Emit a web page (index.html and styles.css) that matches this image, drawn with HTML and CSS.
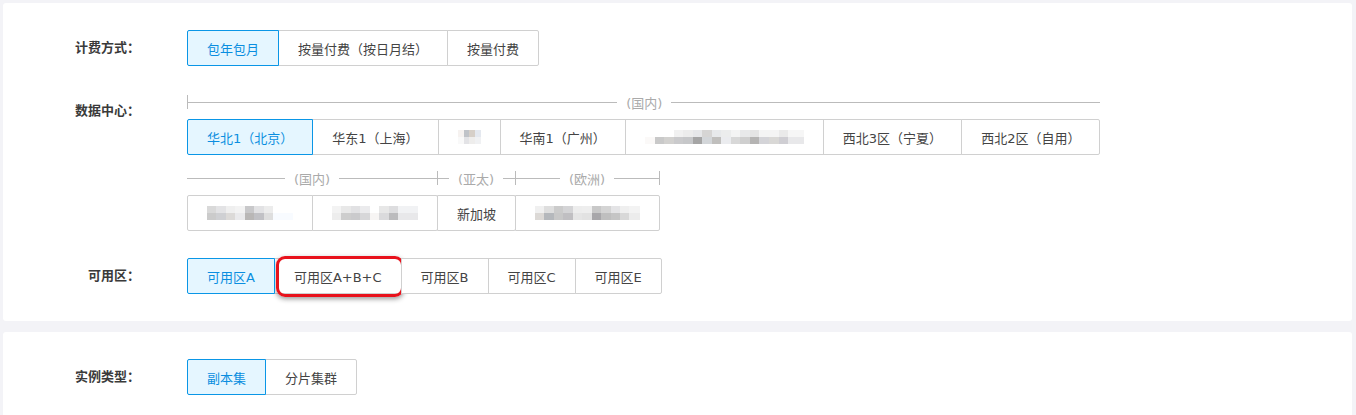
FILE: index.html
```html
<!DOCTYPE html>
<html lang="zh-CN">

<head>
    <meta charset="UTF-8">
    <meta name="viewport" content="width=device-width, initial-scale=1.0">
    <title>购买实例</title>
    <link rel="stylesheet" href="styles.css">
</head>

<body>
    <div class="page">

        <section class="card">
            <div class="form-row">
                <div class="form-label">计费方式：</div>
                <div class="form-field">
                    <div class="btn-group">
                        <button class="opt active">包年包月</button>
                        <button class="opt">按量付费（按日月结）</button>
                        <button class="opt">按量付费</button>
                    </div>
                </div>
            </div>

            <div class="form-row">
                <div class="form-label">数据中心：</div>
                <div class="form-field">
                    <div class="region-group">
                        <div class="region-line">
                            <i class="tick"></i><span class="region-name">(国内)</span>
                        </div>
                        <div class="btn-group">
                            <button class="opt active">华北1（北京）</button>
                            <button class="opt">华东1（上海）</button>
                            <button class="opt w-63"><span class="mosaic mosaic-1"></span></button>
                            <button class="opt">华南1（广州）</button>
                            <button class="opt w-199"><span class="mosaic mosaic-2"></span></button>
                            <button class="opt">西北3区（宁夏）</button>
                            <button class="opt">西北2区（自用）</button>
                        </div>
                    </div>

                    <div class="region-groups">
                        <div class="region-group">
                            <div class="region-line">
                                <span class="region-name">(国内)</span><i class="tick"></i>
                            </div>
                            <div class="btn-group">
                                <button class="opt w-126"><span class="mosaic mosaic-3"></span></button>
                                <button class="opt w-126"><span class="mosaic mosaic-4"></span></button>
                            </div>
                        </div>
                        <div class="region-group">
                            <div class="region-line">
                                <span class="region-name">(亚太)</span><i class="tick"></i>
                            </div>
                            <div class="btn-group">
                                <button class="opt">新加坡</button>
                            </div>
                        </div>
                        <div class="region-group">
                            <div class="region-line">
                                <span class="region-name">(欧洲)</span><i class="tick"></i>
                            </div>
                            <div class="btn-group">
                                <button class="opt w-145"><span class="mosaic mosaic-5"></span></button>
                            </div>
                        </div>
                    </div>
                </div>
            </div>

            <div class="form-row">
                <div class="form-label">可用区：</div>
                <div class="form-field">
                    <div class="btn-group">
                        <button class="opt active">可用区A</button>
                        <button class="opt marked">可用区A+B+C</button>
                        <button class="opt">可用区B</button>
                        <button class="opt">可用区C</button>
                        <button class="opt">可用区E</button>
                    </div>
                </div>
            </div>
        </section>

        <section class="card">
            <div class="form-row">
                <div class="form-label">实例类型：</div>
                <div class="form-field">
                    <div class="btn-group">
                        <button class="opt active">副本集</button>
                        <button class="opt">分片集群</button>
                    </div>
                </div>
            </div>
        </section>

    </div>
</body>

</html>
```

FILE: styles.css
```css
body {
    margin: 0;
    background-color: #f3f3f7;
    font-family: "DejaVu Sans", "Noto Sans CJK SC", sans-serif;
    font-size: 13px;
    color: #444;
}

.page {
    display: flex;
    flex-direction: column;
    gap: 11px;
    padding: 3px 4px 0 3px;
}

.card {
    background-color: #fff;
    border-radius: 3px;
    padding: 27px 0;
}

/* Righe del form */
.form-row {
    display: flex;
    align-items: flex-start;
}

.form-row + .form-row {
    margin-top: 27px;
}

.form-label {
    width: 137px;
    margin-right: 47px;
    text-align: right;
    line-height: 36px;
    font-weight: 700;
    color: #3a3a3a;
}

.form-field {
    display: flex;
    flex-direction: column;
    align-items: flex-start;
}

/* Gruppi di pulsanti */
.btn-group {
    display: flex;
}

.opt {
    height: 36px;
    padding: 0 19px;
    margin-left: -1px;
    border: 1px solid #d0d0d0;
    background-color: #fff;
    font-family: inherit;
    font-size: 13px;
    color: #444;
    white-space: nowrap;
    display: flex;
    align-items: center;
    justify-content: center;
    cursor: pointer;
    position: relative;
}

.btn-group .opt:first-child {
    margin-left: 0;
    border-radius: 2px 0 0 2px;
}

.btn-group .opt:last-child {
    border-radius: 0 2px 2px 0;
}

.opt.active {
    border-color: #0a96e6;
    background-color: #e5f6ff;
    color: #0a8ee0;
    z-index: 1;
}

.w-63 { width: 63px; }
.w-126 { width: 126px; }
.w-145 { width: 145px; }
.w-199 { width: 199px; }

/* Evidenziazione rossa */
.opt.marked::after {
    content: "";
    position: absolute;
    top: -3px;
    bottom: -4px;
    left: 1px;
    right: -3px;
    border: 3px solid #e8121c;
    border-radius: 9px;
    box-shadow: 0 2px 5px rgba(0, 0, 0, 0.4);
}

/* Intestazioni delle regioni */
.region-groups {
    display: flex;
    margin-top: 14px;
}

.region-groups .region-group + .region-group {
    margin-left: -1px;
}

.region-group {
    display: flex;
    flex-direction: column;
    align-items: stretch;
}

.region-line {
    display: flex;
    align-items: center;
    height: 18px;
    margin-bottom: 8px;
    color: #aaa;
}

.region-line::before,
.region-line::after {
    content: "";
    flex: 1;
    height: 1px;
    background-color: #bbb;
}

.region-line .tick {
    width: 1px;
    height: 14px;
    background-color: #bbb;
}

.region-line .tick:first-child {
    order: -1;
}

.region-line .tick:last-child {
    order: 3;
}

.region-name {
    margin: 0 9px;
    order: 1;
}

.region-line::before {
    order: 0;
}

.region-line::after {
    order: 2;
}

/* Nomi oscurati */
.mosaic {
    display: block;
    height: 14px;
}

.mosaic-1 {
    width: 40px;
    background:
        linear-gradient(90deg, #f6f2f0 0 25%, #c0c3c8 25% 50%, #d6cfc8 50% 75%, #e4e8ef 75%) top / 100% 50% no-repeat,
        linear-gradient(90deg, #f9f9f9 0 25%, #e3e3e6 25% 50%, #eeedec 50% 75%, #f0f1f3 75%) bottom / 100% 50% no-repeat;
}

.mosaic-2 {
    width: 170px;
    background:
        linear-gradient(90deg, #fff 0 18%, #f1f1f1 18% 24%, #ececec 24% 30%, #e6e7e9 30% 36%, #d6d5d4 36% 42%, #e7e9eb 42% 48%, #eceded 48% 54%, #f4f4f4 54% 60%, #e8e9ea 60% 66%, #e4e4e4 66% 72%, #f4f4f4 72% 84%, #eaeaea 84% 90%, #f6f6f6 90%) top / 100% 50% no-repeat,
        linear-gradient(90deg, #fbf9f8 0 6%, #c9c9c9 6% 12%, #d2d1cf 12% 18%, #cacacc 18% 24%, #c6c7c9 24% 30%, #a5a5a5 30% 36%, #d3d6d9 36% 42%, #c0bfbd 42% 48%, #ebecef 48% 54%, #d8d8d8 54% 60%, #cfcfcf 60% 66%, #b5b4b3 66% 72%, #d4d4d8 72% 78%, #d9d8d6 78% 84%, #cfced3 84% 90%, #e8e8ea 90%) bottom / 100% 50% no-repeat;
}

.mosaic-3 {
    width: 90px;
    background:
        linear-gradient(90deg, #d9d9d9 0 11%, #e3e3e5 11% 22%, #efefef 22% 33%, #f3f3f3 33% 44%, #c8c8ca 44% 55%, #e2e2e4 55% 66%, #ececec 66% 77%, #fff 77%) top / 100% 50% no-repeat,
        linear-gradient(90deg, #cbcbcb 0 11%, #cfd0d3 11% 22%, #dcdad8 22% 33%, #eaeaec 33% 44%, #b9b7b6 44% 55%, #c1c1c5 55% 66%, #dedede 66% 77%, #f8fbff 77%) bottom / 100% 50% no-repeat;
}

.mosaic-4 {
    width: 90px;
    background:
        linear-gradient(90deg, #f3f3f3 0 11%, #e8e8e8 11% 22%, #e1e1e3 22% 33%, #ebebed 33% 44%, #fff 44% 55%, #e7e7e7 55% 66%, #dddddf 66% 77%, #f1f2f4 77%) top / 100% 50% no-repeat,
        linear-gradient(90deg, #ededed 0 11%, #cdcdcd 11% 22%, #cacacc 22% 33%, #d7d7d9 33% 44%, #f7f5f4 44% 55%, #dadadc 55% 66%, #bbbbbd 66% 77%, #e8e8ea 77%) bottom / 100% 50% no-repeat;
}

.mosaic-5 {
    width: 110px;
    background:
        linear-gradient(90deg, #f0f0f0 0 9%, #dedede 9% 18%, #cbcbcb 18% 27%, #d4d4d6 27% 36%, #ededed 36% 45%, #eeeeee 45% 54%, #c8c8c8 54% 63%, #d4d4d4 63% 72%, #e4e4e6 72% 81%, #efefef 81% 90%, #f3f3f3 90%) top / 100% 50% no-repeat,
        linear-gradient(90deg, #dcd9d6 0 9%, #b5b8bc 9% 18%, #c8c8c8 18% 27%, #c0bfc2 27% 36%, #e5e5e5 36% 45%, #e2e2e2 45% 54%, #a8a7aa 54% 63%, #bfbfbf 63% 72%, #c5c5c5 72% 81%, #d8d8d8 81% 90%, #ececec 90%) bottom / 100% 50% no-repeat;
}
```
